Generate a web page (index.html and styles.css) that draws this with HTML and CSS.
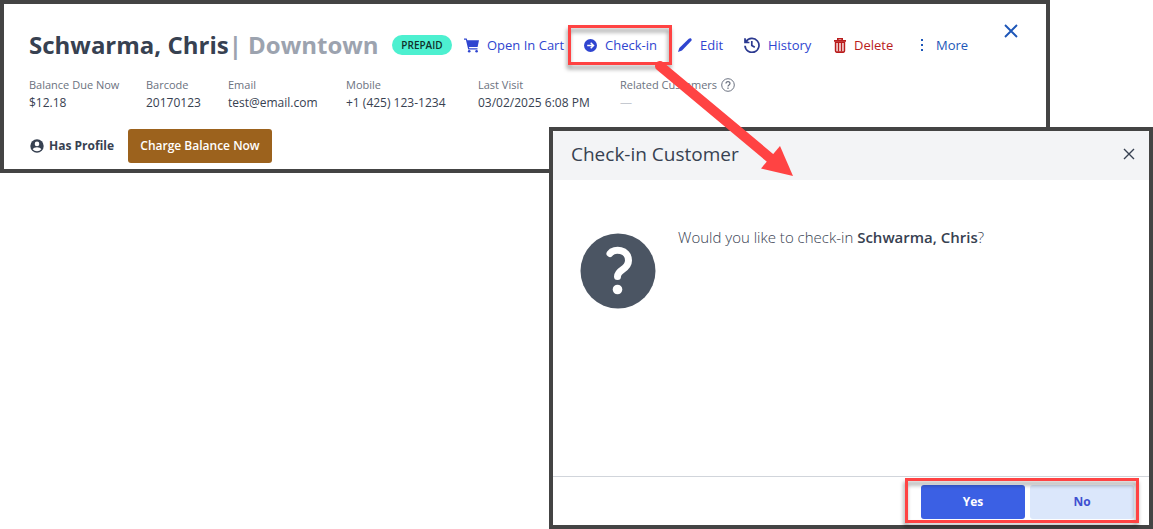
FILE: index.html
```html
<!DOCTYPE html>
<html lang="en">
<head>
  <meta charset="UTF-8">
  <title>Check-in Customer</title>
  <link rel="stylesheet" href="styles.css">
</head>
<body>
  <main class="customer-card">
    <header class="customer-header">
      <h1 class="customer-name">Schwarma, Chris<span class="location">| Downtown</span></h1>
      <span class="badge">PREPAID</span>
      <nav class="actions">
        <button class="action" type="button">
          <svg width="15" height="15" viewBox="0 0 15 15" fill="currentColor">
            <path d="M0 .5h2.7l.6 1.7H15L13.6 9H5l.3 1.2h8.2v1.3H4.2L1.9 1.8H0z"/>
            <circle cx="5.2" cy="13.3" r="1.3"/>
            <circle cx="12.6" cy="13.3" r="1.3"/>
          </svg>
          Open In Cart
        </button>
        <button class="action marked" type="button">
          <svg width="13" height="13" viewBox="0 0 13 13" fill="none">
            <circle cx="6.5" cy="6.5" r="6.5" fill="currentColor"/>
            <path d="M3.2 6.5h6M6.7 3.8l2.8 2.7-2.8 2.7" stroke="#fff" stroke-width="1.5"/>
          </svg>
          Check-in
        </button>
        <button class="action" type="button">
          <svg width="14" height="14" viewBox="0 0 14 14" fill="currentColor">
            <path d="M0 14l1.3-4L10.8.8c1.8-1.5 3.9.4 2.3 2.3L4 12.5z"/>
          </svg>
          Edit
        </button>
        <button class="action history" type="button">
          <svg width="16" height="16" viewBox="0 0 16 16" fill="none" stroke="currentColor" stroke-width="1.7">
            <path d="M2.1 4.6A7 7 0 1 1 1 8.8M1 1.2v4.3h4.4M7.8 4v4.5l3 1.8"/>
            <path d="M1 2v3.5h3.5z" fill="currentColor" stroke="none"/>
          </svg>
          History
        </button>
        <button class="action delete" type="button">
          <svg width="12" height="15" viewBox="0 0 12 15" fill="none" stroke="currentColor" stroke-width="1.6">
            <path d="M0 2.9h12M3.8 2.6V.8h4.4v1.8"/>
            <path d="M1.6 4.2h8.8v8.9q0 1-1 1H2.6q-1 0-1-1z"/>
            <path d="M4.5 5v8.5M7.5 5v8.5"/>
          </svg>
          Delete
        </button>
        <button class="action more" type="button">
          <svg width="4" height="12" viewBox="0 0 4 12" fill="currentColor">
            <path d="M1 0h2v2H1zM1 5h2v2H1zM1 10h2v2H1z"/>
          </svg>
          More
        </button>
      </nav>
      <button class="close" type="button" aria-label="Close customer">
        <svg width="14" height="14" viewBox="0 0 14 14" fill="none" stroke="currentColor" stroke-width="1.9">
          <path d="M1 1l12 12M13 1L1 13"/>
        </svg>
      </button>
    </header>

    <dl class="details">
      <div><dt>Balance Due Now</dt><dd>$12.18</dd></div>
      <div><dt>Barcode</dt><dd>20170123</dd></div>
      <div><dt>Email</dt><dd>test@email.com</dd></div>
      <div><dt>Mobile</dt><dd>+1 (425) 123-1234</dd></div>
      <div><dt>Last Visit</dt><dd>03/02/2025 6:08 PM</dd></div>
      <div>
        <dt>Related Customers
          <svg width="14" height="14" viewBox="0 0 14 14" fill="none" stroke="currentColor">
            <circle cx="7" cy="7" r="6.3"/>
            <path d="M5 5.5c0-2.6 4-2.6 4 0 0 1.5-2 1.4-2 3M7 9.6v1.3" stroke-width="1.2"/>
          </svg>
        </dt>
        <dd class="empty">—</dd>
      </div>
    </dl>

    <div class="profile-row">
      <span class="profile">
        <svg width="14" height="14" viewBox="0 0 14 14">
          <circle cx="7" cy="7" r="6.7" fill="currentColor"/>
          <circle cx="7" cy="4.9" r="2.3" fill="#fff"/>
          <path d="M2.7 10.3c1.1-2.9 7.5-2.9 8.6 0C9.4 12.8 4.6 12.8 2.7 10.3z" fill="#fff"/>
        </svg>
        Has Profile
      </span>
      <button class="charge" type="button">Charge Balance Now</button>
    </div>
  </main>

  <section class="dialog" role="dialog" aria-labelledby="dialog-title">
    <header class="dialog-header">
      <h2 class="dialog-title" id="dialog-title">Check-in Customer</h2>
      <button class="dialog-close" type="button" aria-label="Close">
        <svg width="12" height="12" viewBox="0 0 12 12" fill="none" stroke="currentColor" stroke-width="1.4">
          <path d="M1 1l10 10M11 1L1 11"/>
        </svg>
      </button>
    </header>
    <div class="dialog-body">
      <svg width="76" height="76" viewBox="0 0 76 76" fill="none">
        <circle cx="38" cy="38" r="37.5" fill="#4b5563"/>
        <path d="M30 20.500C34 15 48.500 16 48.500 27.500C48.500 37 37.500 36 37.500 43.500" stroke="#fff" stroke-width="7" stroke-linecap="round"/>
        <circle cx="37.5" cy="56.500" r="4.800" fill="#fff"/>
      </svg>
      <p class="question">Would you like to check-in <strong>Schwarma, Chris</strong>?</p>
    </div>
    <footer class="dialog-footer">
      <div class="choices marked">
        <button class="btn yes" type="button">Yes</button>
        <button class="btn no" type="button">No</button>
      </div>
    </footer>
  </section>

  <svg class="arrow" width="144" height="120" viewBox="0 0 144 120" aria-hidden="true">
    <path d="M10 8L125 104" stroke="#ff4343" stroke-width="10" stroke-linecap="round"/>
    <path d="M143 118L111 110.500L130 88z" fill="#ff4343"/>
  </svg>
</body>
</html>
```

FILE: styles.css
```css
* {
  box-sizing: border-box;
}

body {
  margin: 0;
  min-height: 100vh;
  position: relative;
  background-color: #fff;
  color: #374151;
  font-family: "Open Sans", "Noto Sans", sans-serif;
  font-size: 12px;
  line-height: 18px;
}

h1, h2, p, dl, dd {
  margin: 0;
}

button {
  padding: 0;
  border: 0;
  background: none;
  color: inherit;
  font: inherit;
  cursor: pointer;
}

svg {
  flex: none;
}

.customer-card {
  margin-right: 103px;
  padding: 20px 28px 6px 25px;
  border: 4px solid #444;
}

.customer-header {
  display: flex;
  align-items: center;
  height: 42px;
}

.customer-name {
  width: 363px;
  font-size: 24px;
  line-height: 34px;
  font-weight: 700;
  white-space: nowrap;
}

.location {
  color: #9ca3af;
}

.badge {
  width: 60px;
  border-radius: 10px;
  background-color: #4df0d0;
  color: #10302b;
  font-size: 10px;
  line-height: 20px;
  font-weight: 600;
  text-align: center;
}

.actions {
  display: grid;
  grid-template-columns: 120px 94px 66px 90px 84px auto;
  margin-left: 12px;
}

.action {
  display: flex;
  align-items: center;
  gap: 8px;
  color: #2f45d0;
  font-size: 13px;
  font-weight: 500;
  white-space: nowrap;
}

.history svg {
  color: #2b3990;
}

.delete {
  color: #b91c1c;
}

.more {
  gap: 12px;
  padding-left: 2px;
  color: #1d56b8;
}

.close {
  display: flex;
  align-self: flex-start;
  margin-left: auto;
  color: #1d56b8;
}

/* red call-out frame around a control */
.marked {
  position: relative;
}

.marked::after {
  content: "";
  position: absolute;
  inset: -11px 6px -11px -16px;
  border: 3px solid #ff4343;
  filter: drop-shadow(-1px 4px 2px rgba(0, 0, 0, 0.4));
  pointer-events: none;
}

.details {
  display: grid;
  grid-template-columns: 117px 82px 118px 132px 142px auto;
  margin-top: 10px;
  white-space: nowrap;
}

.details dt {
  display: flex;
  align-items: center;
  gap: 4px;
  color: #6b7280;
  font-size: 11px;
}

.details .empty {
  color: #c5c9d0;
}

.profile-row {
  display: flex;
  align-items: center;
  gap: 14px;
  margin-top: 17px;
}

.profile {
  display: flex;
  align-items: center;
  gap: 5px;
  padding-left: 1px;
  font-weight: 700;
}

.charge {
  width: 144px;
  height: 34px;
  border-radius: 3px;
  background-color: #9c621d;
  color: #fff;
  font-weight: 600;
}

.dialog {
  position: absolute;
  top: 127px;
  right: 0;
  bottom: 0;
  width: 604px;
  display: flex;
  flex-direction: column;
  border: 4px solid #444;
  background-color: #fff;
}

.dialog-header {
  display: flex;
  align-items: center;
  justify-content: space-between;
  height: 49px;
  padding: 0 14px 3px 18px;
  border-radius: 3px 3px 0 0;
  background-color: #f3f4f6;
}

.dialog-title {
  font-size: 19px;
  line-height: 28px;
  font-weight: 400;
}

.dialog-close {
  display: flex;
}

.dialog-body {
  flex: 1;
  display: flex;
  align-items: flex-start;
  gap: 22px;
  padding: 53px 27px;
}

.question {
  margin-top: -7px;
  font-size: 15px;
  line-height: 22px;
  font-weight: 300;
}

.question strong {
  font-weight: 600;
}

.dialog-footer {
  display: flex;
  justify-content: flex-end;
  padding: 8px 15px 6px;
  border-top: 1px solid #d1d5db;
}

.choices {
  display: flex;
  gap: 5px;
}

.choices::after {
  inset: -7px -5px -4px -16px;
}

.btn {
  width: 104px;
  height: 34px;
  border-radius: 3px;
  font-weight: 700;
}

.yes {
  background-color: #3b60e4;
  color: #fff;
}

.no {
  background-color: #dbe7fb;
  color: #4050d0;
}

.arrow {
  position: absolute;
  top: 58px;
  left: 650px;
  pointer-events: none;
}
```
